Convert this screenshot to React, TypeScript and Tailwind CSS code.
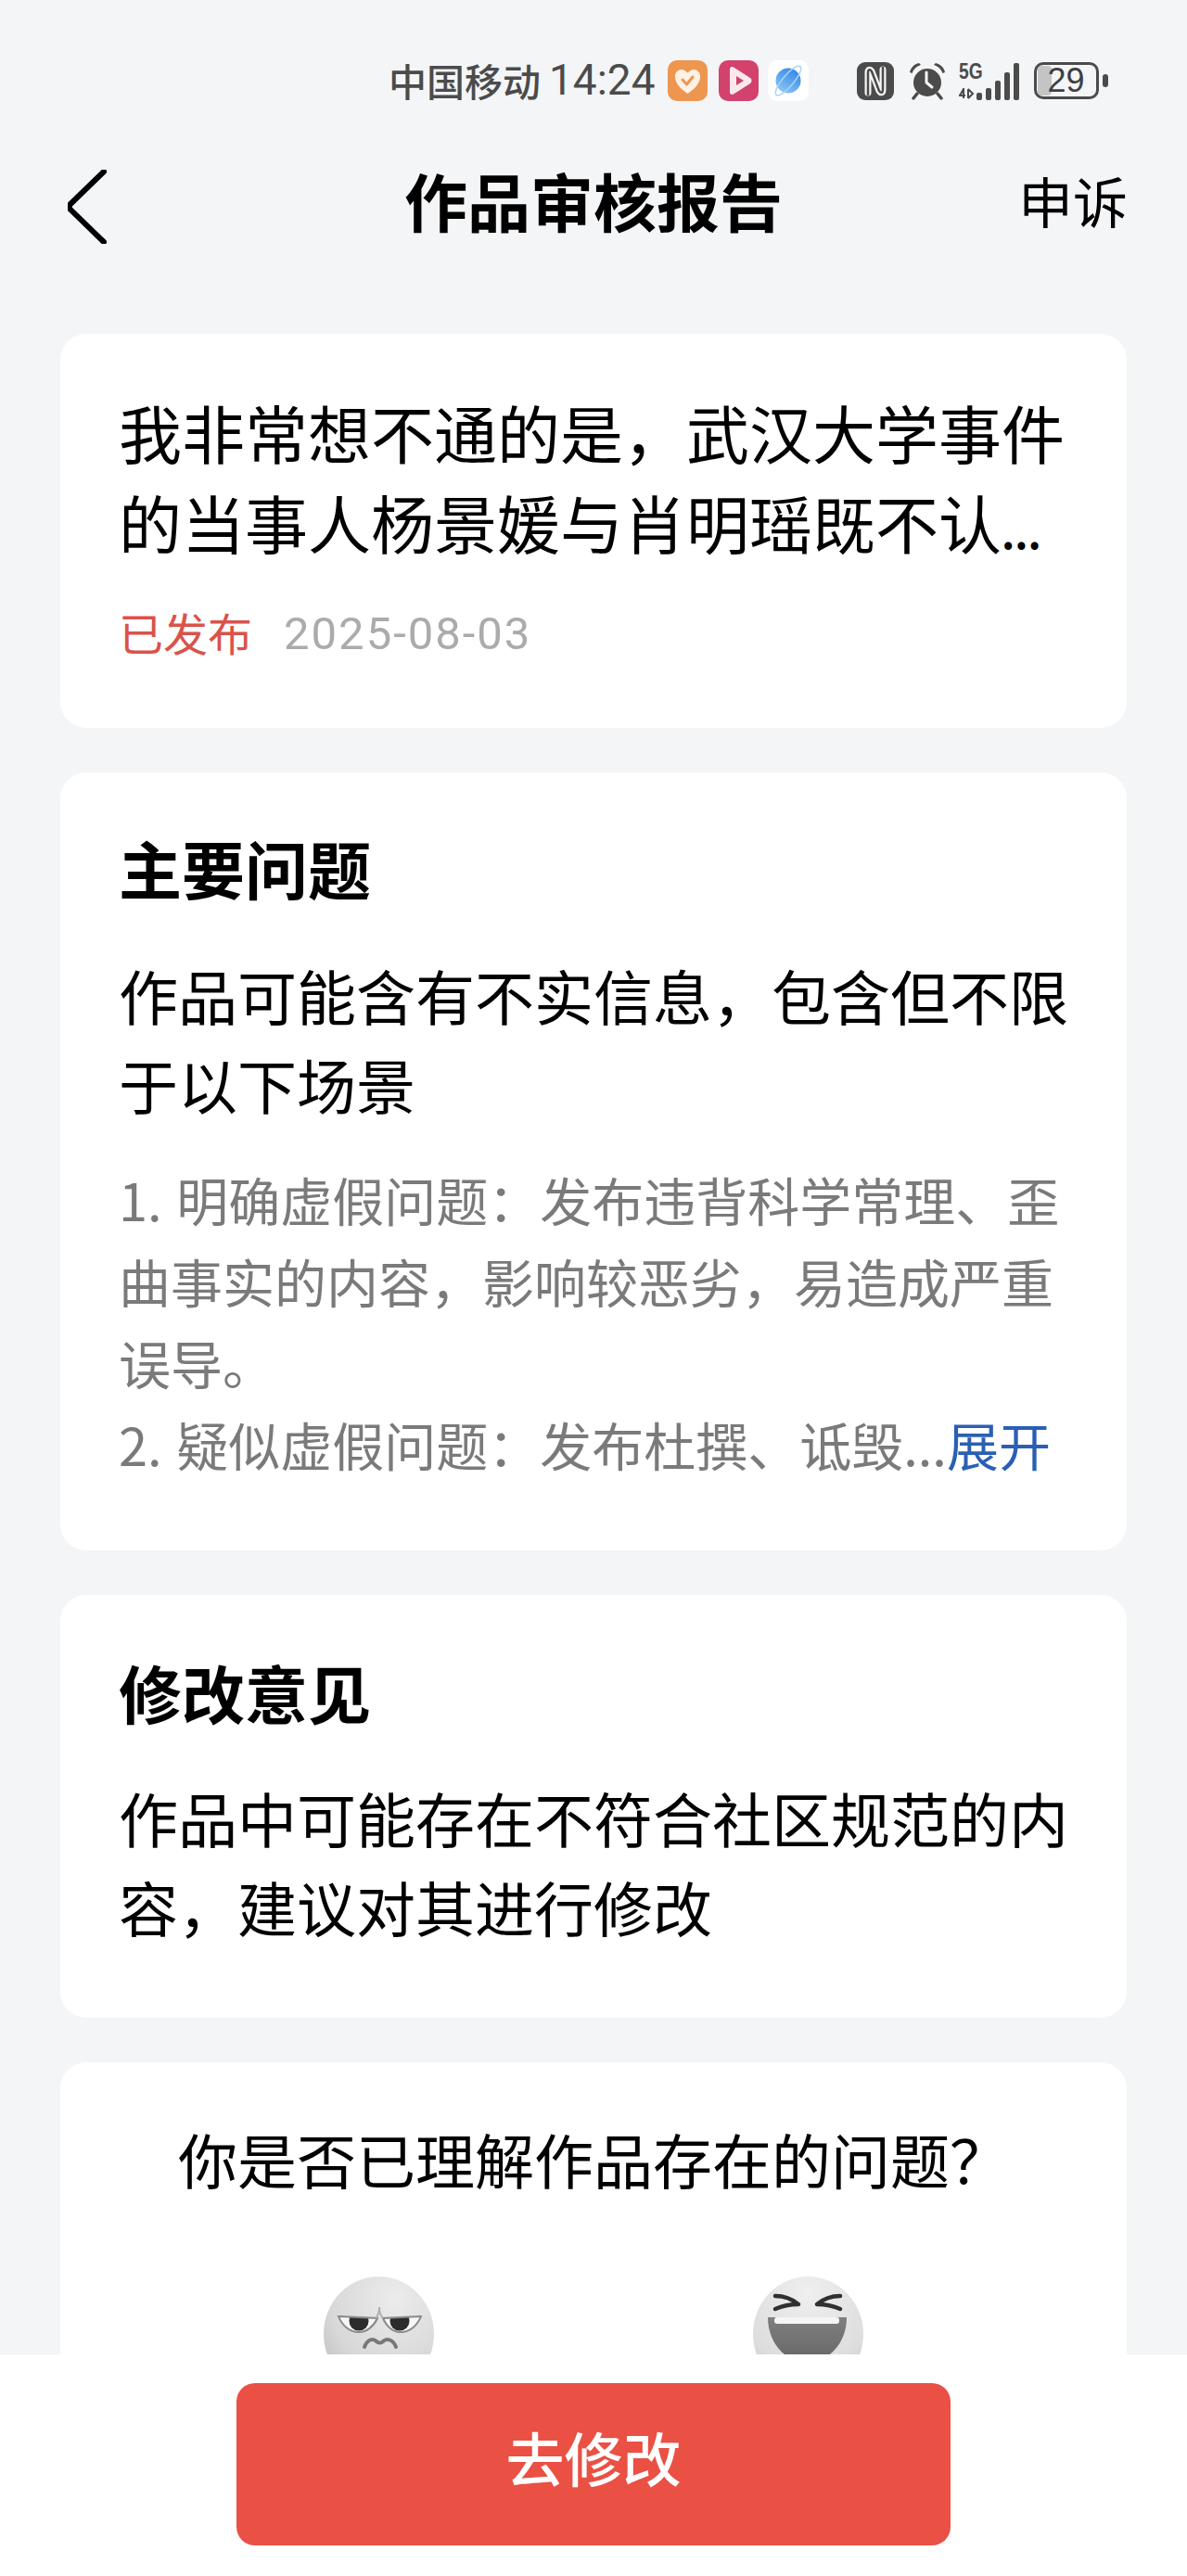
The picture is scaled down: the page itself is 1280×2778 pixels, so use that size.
const FONT = 'font-["Noto_Sans_CJK_SC","Noto_Sans",sans-serif]';

const StatusIcons = () => (
  <div className="flex items-center">
    {/* orange health app */}
    <svg width="43" height="44" viewBox="0 0 43 44">
      <rect width="43" height="44" rx="10" fill="#ee9650" />
      <path d="M21.500 36C14 31 8 25 8 17.500C8 12 13 9 17 10.500C19 11.200 20.500 12.500 21.500 13.500C22.500 12.500 24 11.200 26 10.500C30 9 35 12 35 17.500C35 25 29 31 21.500 36Z" fill="#fdf1e4" />
      <path d="M16 21L20.500 26L27 18" fill="none" stroke="#ee9650" strokeWidth="3" strokeLinecap="round" strokeLinejoin="round" />
    </svg>
    {/* pink video app */}
    <svg width="43" height="44" viewBox="0 0 43 44" className="ml-[12px]">
      <rect width="43" height="44" rx="10" fill="#d2426c" />
      <path d="M12 9.500C12 7.500 14 6.500 16 7.500L34 19C36 20.500 36 23.500 34 25L16 36.500C14 37.500 12 36.500 12 34.500Z" fill="#fbe9ee" />
      <path d="M19 17L27 22L19 27Z" fill="#d2426c" />
    </svg>
    {/* blue planet browser */}
    <svg width="44" height="44" viewBox="0 0 44 44" className="ml-[10px]">
      <defs>
        <linearGradient id="planet" x1="0.8" y1="0" x2="0.2" y2="1">
          <stop offset="0" stopColor="#2f86e6" />
          <stop offset="1" stopColor="#8cc8f7" />
        </linearGradient>
      </defs>
      <rect width="44" height="44" rx="10" fill="#ffffff" />
      <circle cx="22" cy="22" r="13.500" fill="url(#planet)" />
      <ellipse cx="22" cy="22" rx="20" ry="6" transform="rotate(-50 22 22)" fill="none" stroke="#a9d2f5" strokeWidth="1.500" />
    </svg>
    {/* NFC */}
    <svg width="40" height="41" viewBox="0 0 40 41" className="ml-[52px]">
      <rect width="40" height="41" rx="9" fill="#4b4b4b" />
      <path d="M12 33V11C12 8 14 7 16 10L24 31C26 34 28 33 28 30V8" fill="none" stroke="#f4f5f7" strokeWidth="7" strokeLinecap="round" strokeLinejoin="round" />
      <path d="M12 36V11C12 8 14 7 16 10L24 31C26 34 28 33 28 30V5" fill="none" stroke="#4b4b4b" strokeWidth="2.500" strokeLinejoin="round" />
    </svg>
    {/* alarm */}
    <svg width="40" height="41" viewBox="0 0 40 41" className="ml-[16px]">
      <circle cx="20" cy="22" r="15" fill="#4b4b4b" />
      <path d="M1 11C2 6 6 2 11 1L13 3C8 4.500 5 7.500 3.500 12Z" fill="#4b4b4b" />
      <path d="M39 11C38 6 34 2 29 1L27 3C32 4.500 35 7.500 36.500 12Z" fill="#4b4b4b" />
      <path d="M9 34L5 39M31 34L35 39" stroke="#4b4b4b" strokeWidth="3.500" strokeLinecap="round" />
      <path d="M19 11V22L25 27" fill="none" stroke="#f4f5f7" strokeWidth="3" strokeLinecap="round" strokeLinejoin="round" />
    </svg>
    {/* 5G signal */}
    <div className="relative ml-[14px] h-[41px] w-[65px] text-[#4b4b4b]">
      <span className='absolute left-0 top-[-2px] origin-top-left scale-x-[0.8] font-["Liberation_Sans",sans-serif] text-[24px] font-bold leading-[24px]'>5G</span>
      <svg width="18" height="12" viewBox="0 0 18 12" className="absolute bottom-[1px] left-0">
        <path d="M1 8L5 1V11M0 8H7M10 1V11M10 1L15 6L10 11" fill="none" stroke="#4b4b4b" strokeWidth="2" />
      </svg>
      <div className="absolute bottom-0 right-0 flex items-end gap-[4px]">
        <div className="h-[8px] w-[6px] rounded-[2px] bg-[#4b4b4b]" />
        <div className="h-[13px] w-[6px] rounded-[2px] bg-[#4b4b4b]" />
        <div className="h-[21px] w-[6px] rounded-[2px] bg-[#4b4b4b]" />
        <div className="h-[30px] w-[6px] rounded-[2px] bg-[#4b4b4b]" />
        <div className="h-[40px] w-[6px] rounded-[2px] bg-[#4b4b4b]" />
      </div>
    </div>
    {/* battery */}
    <div className="ml-[16px] flex items-center">
      <div className="relative flex h-[40px] w-[70px] items-center justify-center overflow-hidden rounded-[10px] border-[3px] border-[#4b4b4b]">
        <div className="absolute bottom-[1px] left-[1px] top-[1px] w-[15px] rounded-[4px] bg-[#c4c4c4]" />
        <span className='relative font-["Liberation_Sans",sans-serif] text-[36px] leading-none text-[#3f3f3f]'>29</span>
      </div>
      <div className="ml-[4px] h-[14px] w-[6px] rounded-full bg-[#4b4b4b]" />
    </div>
  </div>
);

const GrumpyFace = () => (
  <svg width="119" height="130" viewBox="0 0 119 130">
    <defs>
      <radialGradient id="grumpy" cx="0.65" cy="0.2" r="0.85">
        <stop offset="0" stopColor="#ececec" />
        <stop offset="0.7" stopColor="#d8d8d8" />
        <stop offset="1" stopColor="#c2c2c2" />
      </radialGradient>
      <clipPath id="leftEye">
        <path d="M16 43L58 45C54 54 46 60 38 60C28 60 20 53 16 43Z" />
      </clipPath>
      <clipPath id="rightEye">
        <path d="M105 43L64 45C68 54 75 60 83 60C93 60 101 53 105 43Z" />
      </clipPath>
    </defs>
    <ellipse cx="59.500" cy="62" rx="59.500" ry="62" fill="url(#grumpy)" />
    <path d="M16 43L58 45C54 54 46 60 38 60C28 60 20 53 16 43Z" fill="#f6f6f6" />
    <circle cx="38" cy="48" r="10.500" fill="#2c2c2c" clipPath="url(#leftEye)" />
    <path d="M16 43L58 45C54 54 46 60 38 60C28 60 20 53 16 43Z" fill="none" stroke="#8a8a8a" strokeWidth="2" />
    <path d="M105 43L64 45C68 54 75 60 83 60C93 60 101 53 105 43Z" fill="#f6f6f6" />
    <circle cx="82" cy="48" r="10.500" fill="#2c2c2c" clipPath="url(#rightEye)" />
    <path d="M105 43L64 45C68 54 75 60 83 60C93 60 101 53 105 43Z" fill="none" stroke="#8a8a8a" strokeWidth="2" />
    <path d="M60 33C60 38 59 42 56 45M60 33C60 38 61 42 64 45" fill="none" stroke="#b0b0b0" strokeWidth="2" />
    <path d="M44 76C47 68 53 66 57 70C59 72 62 72 64 70C68 66 75 68 78 76" fill="none" stroke="#777777" strokeWidth="4" strokeLinecap="round" />
  </svg>
);

const LaughFace = () => (
  <svg width="119" height="130" viewBox="0 0 119 130">
    <defs>
      <radialGradient id="laugh" cx="0.5" cy="0.15" r="0.9">
        <stop offset="0" stopColor="#efefef" />
        <stop offset="0.7" stopColor="#dddddd" />
        <stop offset="1" stopColor="#c4c4c4" />
      </radialGradient>
      <linearGradient id="mouth" x1="0" y1="0" x2="0" y2="1">
        <stop offset="0" stopColor="#808080" />
        <stop offset="1" stopColor="#666666" />
      </linearGradient>
    </defs>
    <ellipse cx="59.500" cy="62" rx="59.500" ry="62" fill="url(#laugh)" />
    <path d="M24 21C34 21 43 25 49 30C42 30 33 31 24 35" fill="none" stroke="#303030" strokeWidth="4.500" strokeLinecap="round" strokeLinejoin="round" />
    <path d="M94 21C84 21 75 25 69 30C76 30 85 31 94 35" fill="none" stroke="#303030" strokeWidth="4.500" strokeLinecap="round" strokeLinejoin="round" />
    <path d="M16 44H101C101 70 84 92 58 92C33 92 16 70 16 44Z" fill="url(#mouth)" />
    <rect x="23" y="44" width="70" height="7" rx="3" fill="#f5f5f5" />
  </svg>
);

export default function App() {
  return (
    <div className={`relative h-[2778px] w-[1280px] overflow-hidden bg-[#f4f5f7] text-black ${FONT}`}>
      <div className="flex h-[160px] items-start pl-[419px] pt-[65px]">
        <div className="flex h-[42px] items-center text-[#4b4b4b]">
          <span className="text-[41px] font-medium leading-none">中国移动</span>
          <span className='ml-[9px] font-["Roboto",sans-serif] text-[46px] leading-none'>14:24</span>
        </div>
        <div className="ml-[13px]">
          <StatusIcons />
        </div>
      </div>

      <header className="relative flex h-[120px] items-center justify-center pb-[8px]">
        <svg width="42" height="80" viewBox="0 0 42 80" className="absolute left-[73px] top-[23px]">
          <path d="M39 2L3 37C1.500 38.500 1.500 41.500 3 43L39 78" fill="none" stroke="#000" strokeWidth="6" strokeLinecap="round" strokeLinejoin="round" />
        </svg>
        <h1 className="text-[68px] font-bold leading-none">作品审核报告</h1>
        <span className="absolute right-[64px] top-[26px] text-[59px] leading-none">申诉</span>
      </header>

      <main className="flex flex-col gap-[48px] px-[65px] pt-[80px]">
        <section className="rounded-[28px] bg-white px-[63px] pb-[71px] pt-[57px]">
          <p className="text-[68px] leading-[97px] whitespace-nowrap">我非常想不通的是，武汉大学事件</p>
          <p className="text-[68px] leading-[97px] whitespace-nowrap">的当事人杨景媛与肖明瑶既不认<span className="text-[44px] font-bold leading-none">...</span></p>
          <div className="mt-[40px] flex text-[48px] leading-[60px]">
            <span className="text-[#d9534a]">已发布</span>
            <span className="ml-[34px] mt-[3px] font-['Roboto',sans-serif] text-[49px] tracking-[2px] text-[#ababab]">2025-08-03</span>
          </div>
        </section>

        <section className="rounded-[28px] bg-white px-[63px] pb-[71px] pt-[58px]">
          <h2 className="text-[68px] font-bold leading-[90px]">主要问题</h2>
          <div className="mt-[43px] text-[64px] leading-[96px]">
            <p className="whitespace-nowrap">作品可能含有不实信息，包含但不限</p>
            <p className="whitespace-nowrap">于以下场景</p>
          </div>
          <div className="mt-[33px] text-[56px] leading-[88px] text-[#7a7a7a]">
            <p className="whitespace-nowrap"><span className="mr-[3px]">1.</span> 明确虚假问题：发布违背科学常理、歪</p>
            <p className="whitespace-nowrap">曲事实的内容，影响较恶劣，易造成严重</p>
            <p>误导。</p>
            <p className="whitespace-nowrap"><span className="mr-[3px]">2.</span> 疑似虚假问题：发布杜撰、诋毁...<span className="text-[#2b5fb4]">展开</span></p>
          </div>
        </section>

        <section className="rounded-[28px] bg-white px-[63px] pb-[73px] pt-[60px]">
          <h2 className="text-[68px] font-bold leading-[90px]">修改意见</h2>
          <div className="mt-[41px] text-[64px] leading-[96px]">
            <p className="whitespace-nowrap">作品中可能存在不符合社区规范的内</p>
            <p className="whitespace-nowrap">容，建议对其进行修改</p>
          </div>
        </section>

        <section className="rounded-[28px] bg-white px-[63px] pb-[80px] pt-[58px]">
          <p className="text-center text-[64px] leading-[90px]">你是否已理解作品存在的问题？</p>
          <div className="mt-[83px] flex justify-between pl-[221px] pr-[221px]">
            <GrumpyFace />
            <LaughFace />
          </div>
        </section>
      </main>

      <footer className="absolute bottom-0 left-0 right-0 flex h-[239px] justify-center bg-white pt-[31px]">
        <button className="h-[175px] w-[770px] rounded-[20px] bg-[#ea5044] pb-[16px] text-[63px] font-medium text-white">去修改</button>
      </footer>
    </div>
  );
}
